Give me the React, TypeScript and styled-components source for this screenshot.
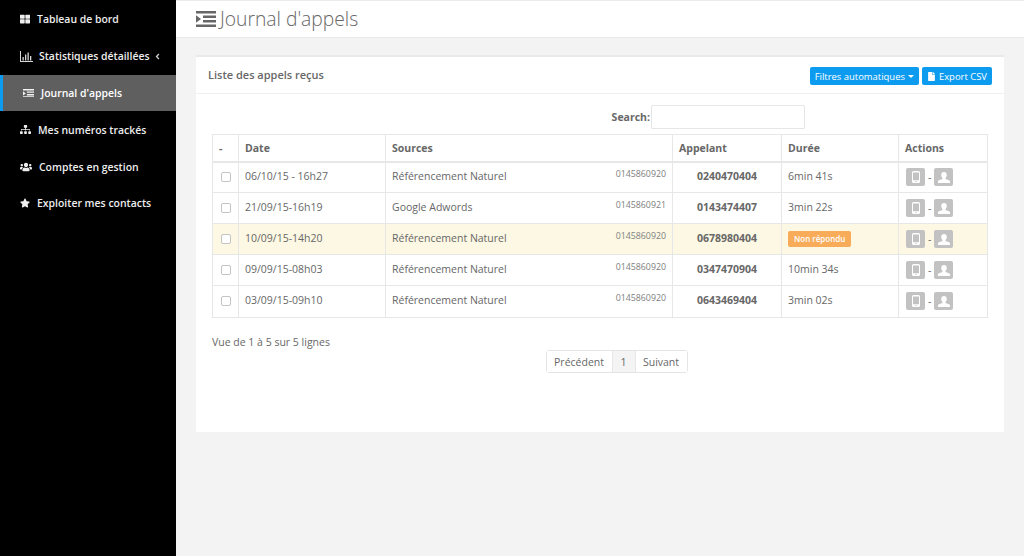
import React from "react";
import styled, { createGlobalStyle } from "styled-components";
import { FaThLarge, FaSitemap, FaUsers, FaStar, FaFile, FaAngleLeft } from "react-icons/fa";

const Global = createGlobalStyle`
  html, body { margin: 0; padding: 0; height: 100%; background: #f3f3f3; }
  body { font-family: "Open Sans", "Liberation Sans", sans-serif; color: #676767; overflow: hidden; }
  * { box-sizing: border-box; }
`;

const Page = styled.div`display: flex; width: 1024px; height: 556px;`;
const Sidebar = styled.nav`width: 176px; flex: none; background: #000; padding-top: 1px;`;
const NavItem = styled.div<{ $active?: boolean; $gap: number; $pad: number }>`
  height: 36.8px; display: flex; align-items: center;
  font-size: 10.45px; font-weight: 600;
  padding-left: ${p => p.$pad}px; gap: ${p => p.$gap}px;
  background: ${p => (p.$active ? "#5f5f5f" : "transparent")};
  border-left: ${p => (p.$active ? "3px solid #0d9bf0" : "none")};
  color: ${p => (p.$active ? "#fff" : "#eee")};
  svg { flex: none; }
`;
const Caret = styled.span`display: flex; margin-left: -3px; color: #ccc;`;
const Main = styled.main`flex: 1; min-width: 0; display: flex; flex-direction: column;`;
const Header = styled.header`
  height: 38px; background: #fff; border-top: 1px solid #ececec; border-bottom: 1px solid #e8e8e8;
  display: flex; align-items: center; padding-left: 20px; gap: 4px;
`;
const Title = styled.h1`margin: 0; font-size: 19.3px; font-weight: 300; color: #676767; line-height: 1;`;
const Card = styled.section`
  margin: 17px 20px 0; height: 377px; background: #fff; border-top: 2px solid #e7eaec;
`;
const CardHead = styled.div`
  height: 37px; border-bottom: 1px solid #eef0f1; display: flex; align-items: center;
  justify-content: space-between; padding: 0 12px;
`;
const CardTitle = styled.h2`margin: 0; font-size: 11px; font-weight: 600; color: #676767; position: relative; top: -1px;`;
const Buttons = styled.div`display: flex; gap: 3px; position: relative; top: 1px;`;
const Btn = styled.button`
  height: 18px; border: 0; border-radius: 2px; background: #0d9bf0; color: #fff; font: 400 9.45px "Open Sans", sans-serif;
  padding: 0 5px; display: flex; align-items: center; gap: 3px;
`;
const Down = styled.span`
  width: 0; height: 0; border-left: 3px solid transparent; border-right: 3px solid transparent; border-top: 3px solid #fff;
`;
const Body = styled.div`padding: 11px 16px 0;`;
const SearchRow = styled.label`
  display: flex; justify-content: flex-end; align-items: center; height: 24px; padding-right: 183px;
  font-size: 10.5px; font-weight: 700;
`;
const SearchInput = styled.input`
  width: 154px; height: 24px; border: 1px solid #e5e6e7; border-radius: 1px; margin-left: 1px; background: #fff; outline: 0;
`;
const Table = styled.table`
  width: 775px; margin-top: 5px; border-collapse: collapse; table-layout: fixed; font-size: 10.5px;
`;
const Th = styled.th`
  height: 27px; border: 1px solid #e7e7e7; border-bottom-width: 2px; text-align: left; padding: 0 6px; font-weight: 700; font-size: 10.5px;
`;
const Td = styled.td`height: 31px; border: 1px solid #e7e7e7; padding: 0 6px 3px; white-space: nowrap;`;
const ActionTd = styled(Td)`padding-bottom: 0;`;
const Row = styled.tr<{ $warn?: boolean }>`
  background: ${p => (p.$warn ? "#fcf8e3" : "#fff")};
  &:last-child td { height: 32px; padding-bottom: 4px; }
  &:last-child ${ActionTd} { padding-bottom: 1px; }
`;
const Check = styled.span`
  display: block; width: 10px; height: 10px; margin: 3px 0 0 2px; border: 1px solid #c4c4c4; border-radius: 2px; background: #fff;
`;
const SourceCell = styled.div`display: flex; justify-content: space-between; align-items: flex-start;`;
const Num = styled.span`font-size: 8.8px; color: #808080; position: relative; top: -1px;`;
const Caller = styled(Td)`font-weight: 700; padding-left: 24px;`;
const Badge = styled.span`
  display: inline-block; background: #f8ac59; color: #fff; font-size: 8px; font-weight: 600; padding: 0 6px; height: 16px; line-height: 16px; border-radius: 2px;
  position: relative; top: 1px;
`;
const Actions = styled.div`display: flex; align-items: center; gap: 3px; padding-left: 1px;`;
const IconBtn = styled.span`
  width: 19px; height: 18px; background: #c2c2c2; color: #fff; border-radius: 2px; display: flex; align-items: center; justify-content: center;
`;
const Info = styled.div`margin-top: 17px; font-size: 10.5px;`;
const PagerRow = styled.div`display: flex; justify-content: center; margin-top: 1px; padding-left: 33px;`;
const Pager = styled.div`display: flex; height: 23px; border: 1px solid #e4e4e4; border-radius: 3px; font-size: 10.5px;`;
const PageItem = styled.span<{ $current?: boolean; $w: number }>`
  width: ${p => p.$w}px; display: flex; align-items: center; justify-content: center;
  background: ${p => (p.$current ? "#f4f4f4" : "#fff")};
  & + & { border-left: 1px solid #e8e8e8; }
`;

const ChartIcon = () => (
  <svg width="13" height="11" viewBox="0 0 13 11" fill="#d8d8d8">
    <path d="M0 0h1v10h12v1H0z" /><path d="M2.500 6h1.300v3.500H2.500zM5 3.500h1.300v6H5zM7.500 1.500h1.300v8H7.500zM10 5h1.300v4.500H10z" />
  </svg>
);
const LogIcon = ({ size, color }: { size: number; color: string }) => (
  <svg width={size} height={size * 0.8} viewBox="0 0 20 16" fill={color}>
    <path d="M0 0h20v2.600H0zM7 4.400h13v2.600H7zM7 9h13v2.600H7zM0 13.400h20V16H0z" />
    <path d="M0 4.300l5 3.700-5 3.700z" />
  </svg>
);
const PhoneIcon = () => (
  <svg width="8" height="12" viewBox="0 0 8 12" fill="#fff">
    <path fillRule="evenodd" d="M1.500 0h5A1.500 1.500 0 0 1 8 1.500v9A1.500 1.500 0 0 1 6.500 12h-5A1.500 1.500 0 0 1 0 10.500v-9A1.500 1.500 0 0 1 1.500 0zM1 1.500v7.700h6V1.500zM4 9.900a.7.700 0 1 0 0 1.400.7.700 0 0 0 0-1.400z" />
  </svg>
);
const PersonIcon = () => (
  <svg width="12" height="11" viewBox="0 0 12 11" fill="#fff">
    <path d="M6 0c1.700 0 2.800 1.200 2.800 3 0 1.300-.6 2.400-1.300 3v1c1.600.6 4.500 1 4.500 2.600V11H0V9.600C0 8 2.900 7.600 4.500 7V6C3.800 5.400 3.200 4.300 3.200 3 3.200 1.200 4.300 0 6 0z" />
  </svg>
);

const rows = [
  { d: "06/10/15 - 16h27", s: "Référencement Naturel", n: "0145860920", c: "0240470404", t: "6min 41s" },
  { d: "21/09/15-16h19", s: "Google Adwords", n: "0145860921", c: "0143474407", t: "3min 22s" },
  { d: "10/09/15-14h20", s: "Référencement Naturel", n: "0145860920", c: "0678980404", t: "", warn: true },
  { d: "09/09/15-08h03", s: "Référencement Naturel", n: "0145860920", c: "0347470904", t: "10min 34s" },
  { d: "03/09/15-09h10", s: "Référencement Naturel", n: "0145860920", c: "0643469404", t: "3min 02s" },
];

export default function App() {
  return (
    <Page>
      <Global />
      <Sidebar>
        <NavItem $pad={20} $gap={7}><FaThLarge size={10} />Tableau de bord</NavItem>
        <NavItem $pad={20} $gap={6}><ChartIcon />Statistiques détaillées<Caret><FaAngleLeft size={9} /></Caret></NavItem>
        <NavItem $active $pad={20} $gap={7}><LogIcon size={11} color="#f2f2f2" />Journal d'appels</NavItem>
        <NavItem $pad={20} $gap={7}><FaSitemap size={11} />Mes numéros trackés</NavItem>
        <NavItem $pad={20} $gap={7}><FaUsers size={12} />Comptes en gestion</NavItem>
        <NavItem $pad={20} $gap={7}><FaStar size={10} />Exploiter mes contacts</NavItem>
      </Sidebar>
      <Main>
        <Header>
          <LogIcon size={20} color="#666" />
          <Title>Journal d'appels</Title>
        </Header>
        <Card>
          <CardHead>
            <CardTitle>Liste des appels reçus</CardTitle>
            <Buttons>
              <Btn>Filtres automatiques <Down /></Btn>
              <Btn><FaFile size={9} />Export CSV</Btn>
            </Buttons>
          </CardHead>
          <Body>
            <SearchRow>Search:<SearchInput /></SearchRow>
            <Table>
              <colgroup>
                <col width="26" /><col width="147" /><col width="287" /><col width="109" /><col width="117" /><col width="89" />
              </colgroup>
              <thead>
                <tr><Th>-</Th><Th>Date</Th><Th>Sources</Th><Th>Appelant</Th><Th>Durée</Th><Th>Actions</Th></tr>
              </thead>
              <tbody>
                {rows.map(r => (
                  <Row key={r.c} $warn={r.warn}>
                    <Td><Check /></Td>
                    <Td>{r.d}</Td>
                    <Td><SourceCell><span>{r.s}</span><Num>{r.n}</Num></SourceCell></Td>
                    <Caller>{r.c}</Caller>
                    <Td>{r.warn ? <Badge>Non répondu</Badge> : r.t}</Td>
                    <ActionTd>
                      <Actions>
                        <IconBtn><PhoneIcon /></IconBtn>-<IconBtn><PersonIcon /></IconBtn>
                      </Actions>
                    </ActionTd>
                  </Row>
                ))}
              </tbody>
            </Table>
            <Info>Vue de 1 à 5 sur 5 lignes</Info>
            <PagerRow>
              <Pager>
                <PageItem $w={65}>Précédent</PageItem>
                <PageItem $current $w={23}>1</PageItem>
                <PageItem $w={52}>Suivant</PageItem>
              </Pager>
            </PagerRow>
          </Body>
        </Card>
      </Main>
    </Page>
  );
}
